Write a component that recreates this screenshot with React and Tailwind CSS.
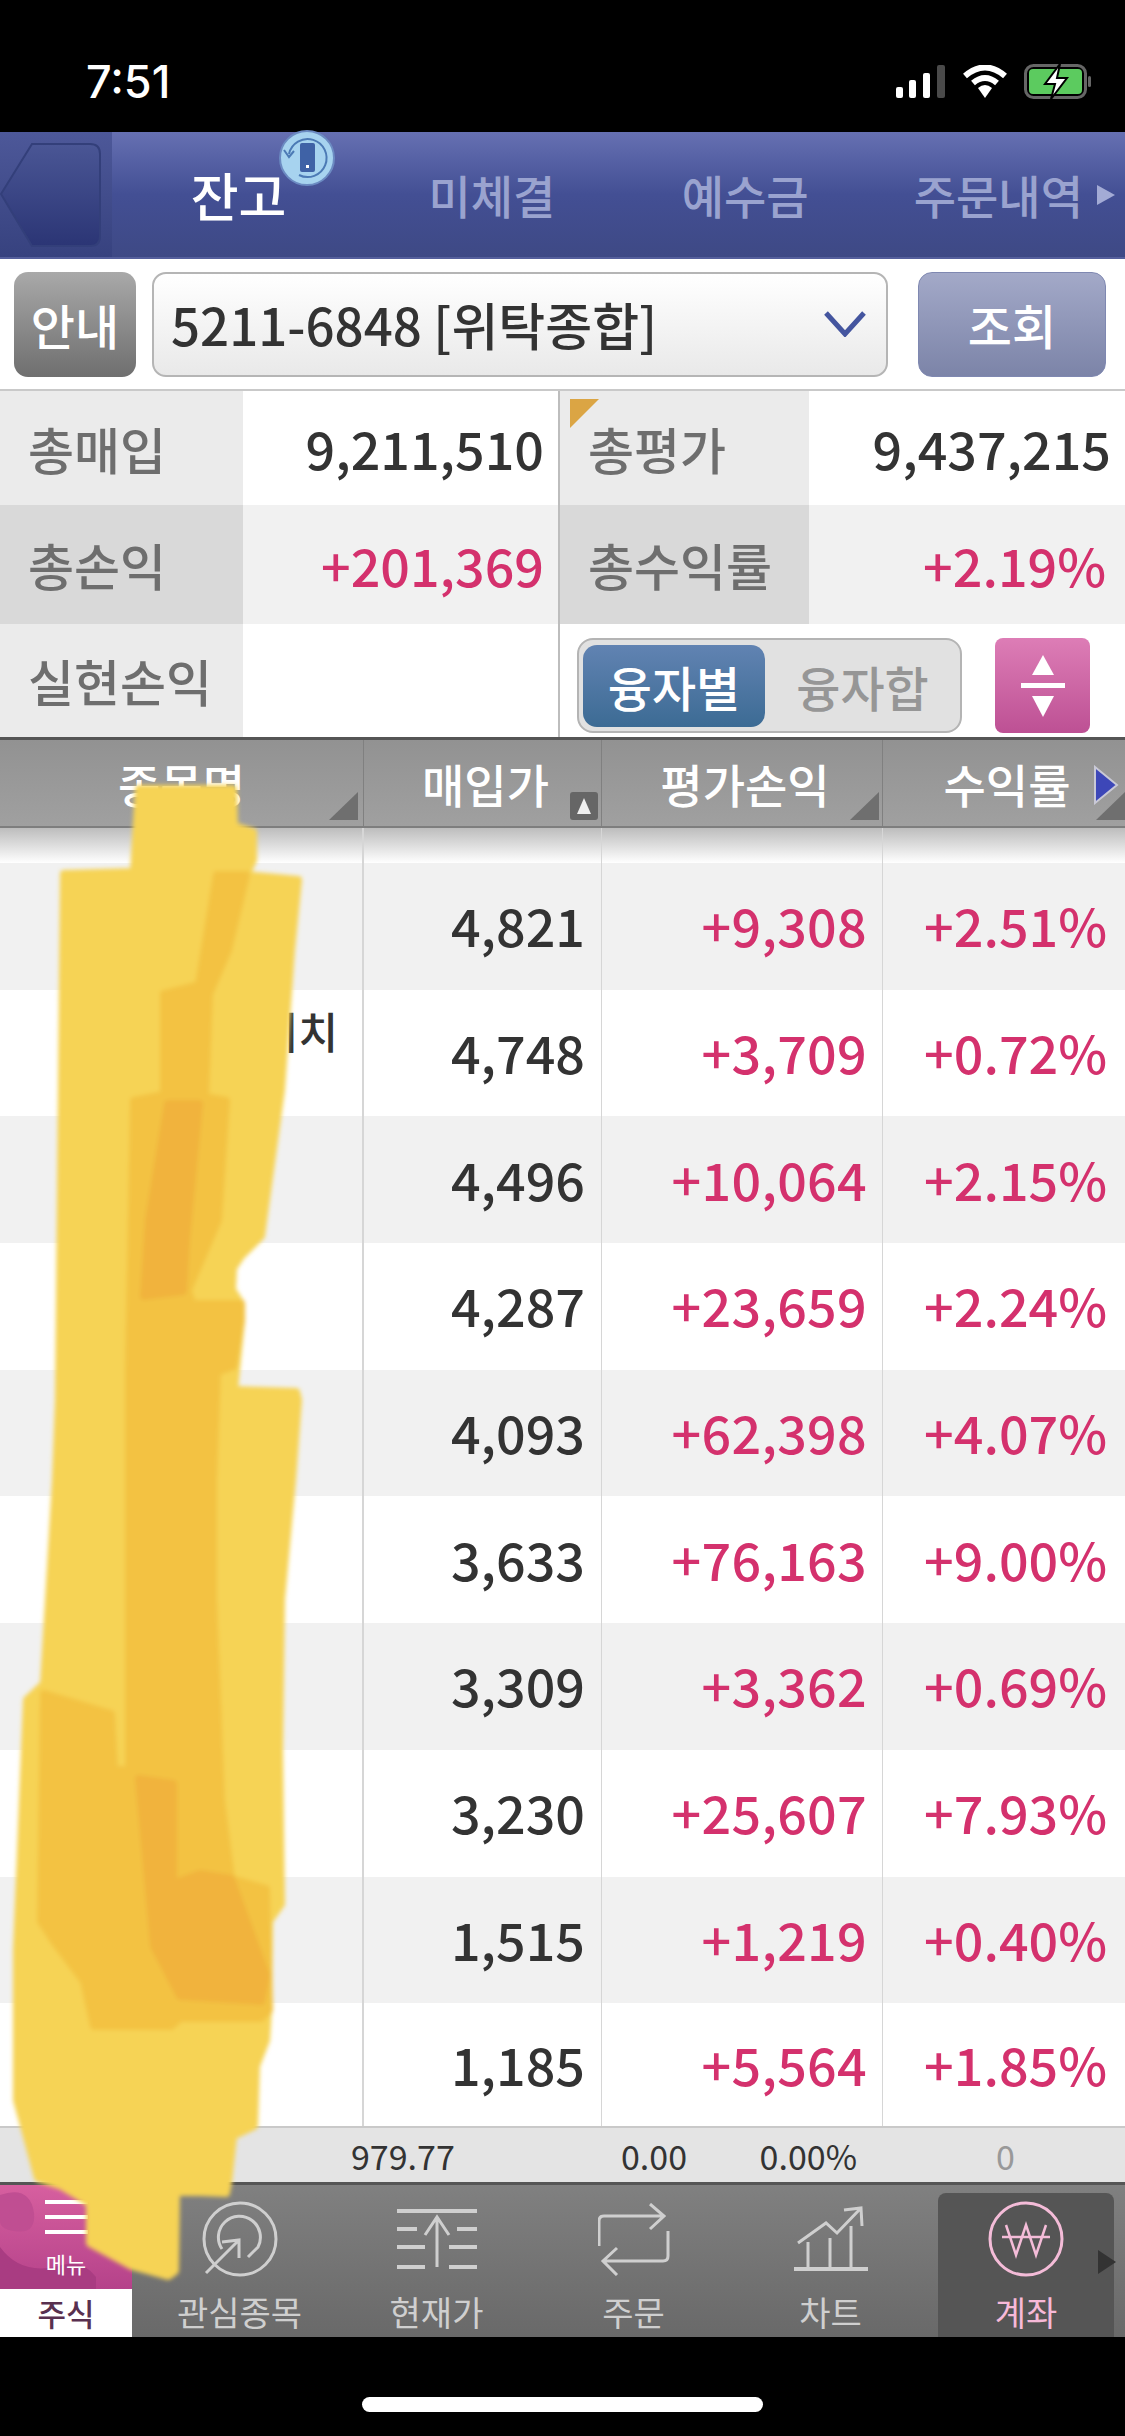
const FONT = { fontFamily: '"Noto Sans CJK KR", "Noto Sans", sans-serif' };

const rows = [
  ["4,821", "+9,308", "+2.51%"],
  ["4,748", "+3,709", "+0.72%"],
  ["4,496", "+10,064", "+2.15%"],
  ["4,287", "+23,659", "+2.24%"],
  ["4,093", "+62,398", "+4.07%"],
  ["3,633", "+76,163", "+9.00%"],
  ["3,309", "+3,362", "+0.69%"],
  ["3,230", "+25,607", "+7.93%"],
  ["1,515", "+1,219", "+0.40%"],
  ["1,185", "+5,564", "+1.85%"],
];

function StatusBar() {
  return (
    <div className="h-[132px] bg-black flex items-start justify-between pt-[59px] pl-[86px] pr-[33px]">
      <span className="text-white text-[45px] leading-[45px] font-medium" style={{ fontFamily: "Inter, sans-serif" }}>7:51</span>
      <div className="flex items-center gap-[17px] mt-[5px]">
        <svg width="51" height="33" viewBox="0 0 51 33">
          <rect x="1" y="22" width="7" height="11" rx="2" fill="#fff" />
          <rect x="14" y="15" width="7" height="18" rx="2" fill="#fff" />
          <rect x="28" y="8" width="7" height="25" rx="2" fill="#fff" />
          <rect x="42" y="0" width="8" height="33" rx="2" fill="#4a4a4a" />
        </svg>
        <svg width="44" height="33" viewBox="0 0 44 33">
          <path d="M2 11 Q22 -6 42 11" fill="none" stroke="#fff" strokeWidth="6" />
          <path d="M10 18 Q22 8 34 18" fill="none" stroke="#fff" strokeWidth="6" />
          <path d="M15 23 Q22 17 29 23 L22 33 Z" fill="#fff" />
        </svg>
        <svg width="68" height="35" viewBox="0 0 68 35">
          <rect x="1.5" y="1.5" width="60" height="32" rx="8" fill="none" stroke="#666" strokeWidth="3" />
          <rect x="5" y="5" width="53" height="25" rx="4" fill="#5ccb5f" />
          <rect x="64" y="12" width="3" height="11" rx="1.5" fill="#666" />
          <path d="M36 0 L21 20 H31 L27 35 L43 14 H33 Z" fill="#fff" stroke="#000" strokeWidth="2" />
        </svg>
      </div>
    </div>
  );
}

function NavBar() {
  return (
    <div className="h-[127px] flex bg-gradient-to-b from-[#6670b2] via-[#434f94] to-[#3e4985] border-b-2 border-[#555f9c]">
      <div className="w-[112px] h-full bg-gradient-to-b from-[#4d5899] to-[#37427f] flex items-center">
        <svg width="104" height="106" viewBox="0 0 104 106">
          <defs>
            <linearGradient id="back" x1="0" y1="0" x2="0" y2="1">
              <stop offset="0" stopColor="#4a5695" />
              <stop offset="1" stopColor="#2b3575" />
            </linearGradient>
          </defs>
          <path d="M32 2 H90 Q100 2 100 12 V94 Q100 104 90 104 H32 L1 52 Z" fill="url(#back)" stroke="#333f7a" strokeWidth="2" />
        </svg>
      </div>
      <div className="flex-1 grid grid-cols-4 items-center relative text-[#9aa3cf] text-[46px] font-medium text-center" style={FONT}>
        <div className="relative text-white text-[52px]">
          잔고
          <svg className="absolute left-[167px] top-[-26px]" width="56" height="56" viewBox="0 0 56 56">
            <circle cx="28" cy="28" r="27" fill="#a7d3ef" stroke="#6c8bc2" strokeWidth="2" />
            <path d="M10 24 A19 19 0 1 1 20 45" fill="none" stroke="#4c7ab5" strokeWidth="2" />
            <path d="M5 20 L10 27 L15 21" fill="none" stroke="#4c7ab5" strokeWidth="2" />
            <rect x="21" y="13" width="15" height="29" rx="2" fill="#3f62a6" />
            <rect x="27" y="35" width="3" height="3" fill="#fff" />
          </svg>
        </div>
        <div>미체결</div>
        <div>예수금</div>
        <div className="relative">
          주문내역
          <svg className="absolute right-[10px] top-[25px]" width="18" height="20" viewBox="0 0 18 20">
            <path d="M0 0 L18 10 L0 20 Z" fill="#a3abd5" />
          </svg>
        </div>
      </div>
    </div>
  );
}

function Toolbar() {
  return (
    <div className="h-[132px] bg-white border-b-2 border-[#c9c9c9] flex items-center pl-[14px]" style={FONT}>
      <div className="w-[122px] h-[105px] rounded-[14px] bg-gradient-to-b from-[#a9a9a9] to-[#6f6f6f] text-white text-[48px] font-medium flex items-center justify-center">안내</div>
      <div className="ml-[16px] w-[736px] h-[105px] rounded-[14px] border-2 border-[#b5b5b5] bg-gradient-to-b from-white to-[#e9e9e9] flex items-center justify-between pl-[17px] pr-[20px] text-[#333] text-[51px] font-medium">
        <span>5211-6848 [위탁종합]</span>
        <svg width="42" height="26" viewBox="0 0 42 26">
          <path d="M2 2 L21 23 L40 2" fill="none" stroke="#44559f" strokeWidth="5" />
        </svg>
      </div>
      <div className="ml-[30px] w-[188px] h-[105px] rounded-[14px] border border-[#7f88b1] bg-gradient-to-b from-[#a3a9c8] to-[#7c84a8] text-white text-[48px] font-medium flex items-center justify-center">조회</div>
    </div>
  );
}

function Label({ children, bg, w }) {
  return <div className={`${w} ${bg} h-full flex items-center pl-[28px] text-[#6e6e6e] text-[50px] font-medium`}>{children}</div>;
}

function Summary() {
  return (
    <div className="bg-white" style={FONT}>
      <div className="h-[114px] flex">
        <Label w="w-[243px]" bg="bg-[#ebebeb]">총매입</Label>
        <div className="w-[317px] border-r-2 border-[#bdbdbd] bg-white flex items-center justify-end pr-[14px] text-[#333] text-[52px] font-medium">9,211,510</div>
        <div className="relative w-[249px] h-full">
          <Label w="w-full" bg="bg-[#ebebeb]">총평가</Label>
          <svg className="absolute left-[10px] top-[8px]" width="29" height="29" viewBox="0 0 29 29">
            <path d="M0 0 H29 L0 29 Z" fill="#dba544" />
          </svg>
        </div>
        <div className="flex-1 flex items-center justify-end pr-[14px] text-[#333] text-[52px] font-medium">9,437,215</div>
      </div>
      <div className="h-[119px] flex bg-[#f1f1f1]">
        <Label w="w-[243px]" bg="bg-[#d9d9d9]">총손익</Label>
        <div className="w-[317px] border-r-2 border-[#bdbdbd] flex items-center justify-end pr-[14px] text-[#d4316d] text-[52px] font-medium">+201,369</div>
        <Label w="w-[249px]" bg="bg-[#d9d9d9]">총수익률</Label>
        <div className="flex-1 flex items-center justify-end pr-[19px] text-[#d4316d] text-[52px] font-medium">+2.19%</div>
      </div>
      <div className="h-[113px] flex">
        <Label w="w-[243px]" bg="bg-[#ebebeb]">실현손익</Label>
        <div className="w-[317px] border-r-2 border-[#bdbdbd]" />
        <div className="ml-[17px] mt-[14px] w-[385px] h-[95px] rounded-[16px] border-2 border-[#b4b4b4] bg-[#e1e1e1] flex items-center pl-[4px]">
          <div className="w-[182px] h-[82px] rounded-[14px] bg-gradient-to-b from-[#6183b2] to-[#3c6b94] text-white text-[48px] font-medium flex items-center justify-center">융자별</div>
          <div className="flex-1 text-center text-[#969696] text-[48px] font-medium">융자합</div>
        </div>
        <div className="ml-[33px] mt-[14px] w-[95px] h-[95px] rounded-[8px] bg-gradient-to-b from-[#dd7db6] to-[#bd5094] flex items-center justify-center">
          <svg width="44" height="62" viewBox="0 0 44 62">
            <path d="M22 0 L33 20 H11 Z" fill="#fff" />
            <rect x="0" y="28" width="44" height="5" fill="#fff" />
            <path d="M22 62 L33 41 H11 Z" fill="#fff" />
          </svg>
        </div>
      </div>
    </div>
  );
}

function Corner({ cls }) {
  return (
    <svg className={`absolute bottom-[6px] ${cls}`} width="29" height="28" viewBox="0 0 29 28">
      <path d="M29 0 V28 H0 Z" fill="#6f6f6f" />
    </svg>
  );
}

function TableHeader() {
  return (
    <div className="h-[91px] grid grid-cols-[364px_238px_281px_242px] bg-gradient-to-b from-[#929292] to-[#a0a0a0] border-t-[3px] border-b-[2px] border-t-[#555] border-b-[#7e7e7e] text-white text-[46px] font-medium" style={FONT}>
      <div className="relative border-r border-[#808080] flex items-center justify-center">종목명<Corner cls="right-[5px]" /></div>
      <div className="relative border-r border-[#808080] flex items-center justify-center pl-[6px]">
        매입가
        <div className="absolute right-[3px] bottom-[6px] w-[28px] h-[28px] rounded-[3px] bg-[#666] flex items-center justify-center">
          <svg width="14" height="16" viewBox="0 0 14 16"><path d="M7 0 L14 16 H0 Z" fill="#eee" /></svg>
        </div>
      </div>
      <div className="relative border-r border-[#808080] flex items-center justify-center pl-[6px]">평가손익<Corner cls="right-[3px]" /></div>
      <div className="relative flex items-center justify-center pl-[6px]">
        수익률
        <svg className="absolute right-[6px] top-[25px]" width="26" height="40" viewBox="0 0 26 40">
          <path d="M2 2 L24 20 L2 38 Z" fill="#3d47b8" stroke="#c9c9d6" strokeWidth="2" />
        </svg>
        <Corner cls="right-[0px]" />
      </div>
    </div>
  );
}

function TableRow({ row, i }) {
  const isLast = i === rows.length - 1;
  return (
    <div className={`grid grid-cols-[364px_238px_281px_242px] text-[52px] font-medium ${isLast ? "flex-1" : "h-[126.7px]"} ${i % 2 === 0 ? "bg-[#f1f1f1]" : "bg-white"}`} style={FONT}>
      <div className="border-r-2 border-[#d6d6d6] flex items-start justify-end pr-[24px] pt-[8px] text-[#333] text-[43px]">
        {i === 1 ? "이치" : ""}
      </div>
      <div className="border-r border-[#d6d6d6] flex items-center justify-end pr-[16px] pb-[2px] text-[#333]">{row[0]}</div>
      <div className="border-r border-[#d6d6d6] flex items-center justify-end pr-[15px] pb-[2px] text-[#d4316d] tracking-[0.3px]">{row[1]}</div>
      <div className="flex items-center justify-end pr-[18px] pb-[2px] text-[#d4316d]">{row[2]}</div>
    </div>
  );
}

function Totals() {
  return (
    <div className="h-[56px] grid grid-cols-[364px_238px_281px_242px] bg-[#e4e4e4] border-t-2 border-[#c9c9c9] text-[#333] text-[34px]" style={FONT}>
      <div />
      <div className="flex items-center"><span className="-ml-[13px]">979.77</span></div>
      <div className="flex items-center justify-between pl-[19px] pr-[26px]">
        <span>0.00</span>
        <span>0.00%</span>
      </div>
      <div className="flex items-center text-[#999]"><span className="ml-[113px]">0</span></div>
    </div>
  );
}

function TabIcon({ index, stroke }) {
  if (index === 0) {
    return (
      <svg width="76" height="76" viewBox="0 0 76 76" fill="none" stroke={stroke} strokeWidth="3">
        <circle cx="38" cy="38" r="36" />
        <path d="M20 48 A21 21 0 1 1 56 46 L46 56" />
        <path d="M4 72 L37 39 M20 41 L37 39 L37 57" />
      </svg>
    );
  }
  if (index === 1) {
    return (
      <svg width="80" height="60" viewBox="0 0 80 60" fill="none" stroke={stroke} strokeWidth="4">
        <path d="M0 2 H80 M0 20 H20 M60 20 H80 M0 38 H28 M52 38 H80 M0 58 H28 M52 58 H80" />
        <path d="M40 58 V10 M28 26 L40 8 L52 26" strokeWidth="3" />
      </svg>
    );
  }
  if (index === 2) {
    return (
      <svg width="72" height="73" viewBox="0 0 72 73" fill="none" stroke={stroke} strokeWidth="3">
        <path d="M1 43 V18 Q1 13 6 13 H64 M52 1 L66 13 L52 26" />
        <path d="M70 28 V53 Q70 58 65 58 H7 M19 45 L5 58 L19 72" />
      </svg>
    );
  }
  if (index === 3) {
    return (
      <svg width="74" height="66" viewBox="0 0 74 66" fill="none" stroke={stroke} strokeWidth="3">
        <path d="M0 63 H74" strokeWidth="4" />
        <path d="M14 62 V36 M36 62 V32 M57 62 V20" />
        <path d="M4 37 L32 17 L43 27 L67 2 M50 4 L67 2 L68 20" />
      </svg>
    );
  }
  return (
    <svg width="76" height="76" viewBox="0 0 76 76" fill="none" stroke={stroke} strokeWidth="3">
      <circle cx="38" cy="38" r="36" />
      <path d="M18 24 L28 54 L38 24 L48 54 L58 24 M14 36 H62" strokeWidth="2.5" />
    </svg>
  );
}

function TabBar() {
  const tabs = ["관심종목", "현재가", "주문", "차트"];
  return (
    <div className="h-[155px] flex border-t-[3px] border-[#555] bg-gradient-to-b from-[#808080] to-[#696969]" style={FONT}>
      <div className="w-[132px] flex flex-col">
        <div className="relative h-[104px] overflow-hidden bg-gradient-to-b from-[#d75f9f] to-[#b5428a] flex flex-col items-center pt-[15px]">
          <svg className="absolute left-0 top-0" width="132" height="104" viewBox="0 0 132 104">
            <path d="M0 10 Q30 0 34 28 Q36 50 14 46 Q0 44 0 36 Z" fill="#c04e92" />
            <path d="M0 62 Q22 92 62 80 Q82 74 96 92 L96 104 H0 Z" fill="#a93c82" />
          </svg>
          <div className="relative w-[43px] flex flex-col gap-[11px]">
            <div className="h-[4px] bg-white" />
            <div className="h-[4px] bg-white" />
            <div className="h-[4px] bg-white" />
          </div>
          <div className="relative text-white text-[22px] leading-[30px] mt-[14px]">메뉴</div>
        </div>
        <div className="flex-1 bg-white text-[#59304f] text-[31px] font-medium flex items-center justify-center">주식</div>
      </div>
      <div className="flex-1 flex pl-[9px] relative">
        {tabs.map((t, i) => (
          <div key={t} className="w-[197px] flex flex-col items-center pt-[15px] text-[#cfcfcf]">
            <div className="h-[78px] flex items-center">
              <TabIcon index={i} stroke="#cfcfcf" />
            </div>
            <div className="text-[34px] leading-[34px] mt-[17px]">{t}</div>
          </div>
        ))}
        <div className="ml-[9px] mt-[8px] w-[176px] flex flex-col items-center pt-[7px] bg-[#555] rounded-t-[8px] text-[#f7b9d8]">
          <div className="h-[78px] flex items-center">
            <TabIcon index={4} stroke="#f4bcd8" />
          </div>
          <div className="text-[34px] leading-[34px] mt-[17px]">계좌</div>
        </div>
        <svg className="absolute right-[9px] top-[65px]" width="18" height="24" viewBox="0 0 18 24">
          <path d="M0 0 L18 12 L0 24 Z" fill="#333" />
        </svg>
      </div>
    </div>
  );
}

function Highlighter() {
  return (
    <svg className="absolute left-0 top-0 pointer-events-none" width="1125" height="2436" viewBox="0 0 1125 2436">
      <defs>
        <filter id="soft" x="-5%" y="-5%" width="110%" height="110%">
          <feGaussianBlur stdDeviation="2" />
        </filter>
      </defs>
      <g filter="url(#soft)" strokeLinejoin="round" strokeWidth="8">
        <path
          fill="#f6d355"
          stroke="#f6d355"
          d="M139 789 H233 L234 826 L253 832 L253 860 L246 875 L298 880 L291 950 L281 1090 L261 1236 L241 1256 L233 1268 L232 1290 L241 1304 L241 1320 L234 1390 L296 1392 L298 1400 L292 1480 L281 1600 L279 1750 L281 1904 L269 1921 L268 2010 L266 2040 L256 2066 L254 2126 L233 2136 L228 2182 L226 2193 L200 2192 L176 2192 L175 2271 L168 2276 L132 2266 L90 2243 L90 2203 L62 2186 L38 2178 L26 2133 L17 2100 L17 1950 L27 1700 L44 1684 L49 1600 L56 1480 L59 1400 L64 874 L134 872 Z"
        />
        <path
          fill="#f3c243"
          stroke="#f3c243"
          d="M217 875 H246 L228 950 L209 994 L205 1097 L226 1101 L218 1220 L188 1290 L192 1304 L241 1304 L241 1320 L233 1366 L217 1372 L213 1480 L213 1600 L221 1800 L231 1879 L266 1889 L269 2010 L261 2018 L180 2018 L171 2026 L94 2026 L84 1981 L54 1941 L41 1921 L44 1694 L111 1714 L114 1770 L129 1770 L129 1370 L134 1101 L164 1095 L164 994 L199 985 Z"
        />
        <path
          fill="#f1b33c"
          stroke="#f1b33c"
          d="M168 1104 L199 1104 L186 1240 L183 1291 L144 1296 L149 1220 Z M139 1779 L173 1784 L173 1884 L200 1874 L231 1879 L266 1975 L261 2001 L180 1996 L154 1946 Z"
        />
      </g>
    </svg>
  );
}

export default function App() {
  return (
    <div className="relative w-[1125px] h-[2436px] bg-black overflow-hidden">
      <StatusBar />
      <NavBar />
      <Toolbar />
      <Summary />
      <TableHeader />
      <div className="h-[35px] bg-gradient-to-b from-[#bdbdbd] to-white grid grid-cols-[364px_238px_281px_242px]">
        <div className="border-r-2 border-[#d6d6d6]" />
        <div className="border-r border-[#d6d6d6]" />
        <div className="border-r border-[#d6d6d6]" />
      </div>
      <div className="h-[1263px] flex flex-col">
        {rows.map((row, i) => (
          <TableRow key={row[0]} row={row} i={i} />
        ))}
      </div>
      <Totals />
      <TabBar />
      <div className="h-[99px] bg-black flex justify-center pt-[60px]">
        <div className="w-[401px] h-[15px] rounded-full bg-white" />
      </div>
      <Highlighter />
    </div>
  );
}
